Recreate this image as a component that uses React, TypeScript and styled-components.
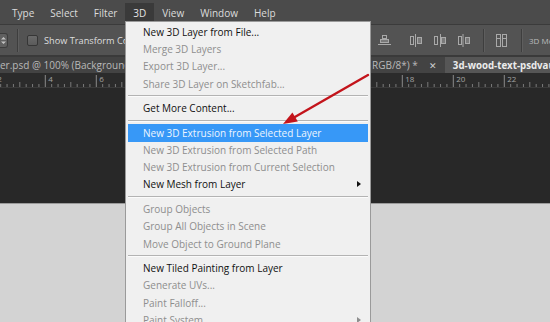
import React from 'react';
import styled, { createGlobalStyle, css } from 'styled-components';

const GlobalStyle = createGlobalStyle`
  html, body { margin: 0; padding: 0; background: #282828; }
  #root { width: 550px; height: 322px; }
`;

const Root = styled.div`
  width: 550px;
  height: 322px;
  position: relative;
  overflow: hidden;
  display: flex;
  flex-direction: column;
  font-family: "Open Sans", "Noto Sans", sans-serif;
  font-size: 10px;
  background: #282828;
`;

/* ---------- menu bar ---------- */
const MenuBar = styled.div`
  height: 24px;
  flex: 0 0 24px;
  display: flex;
  padding-left: 4px;
  background: #4b4b4b;
  box-sizing: border-box;
`;

const MenuTitle = styled.div<{ $open?: boolean }>`
  margin-top: 3px;
  height: 21px;
  padding: 0 8px 1px;
  box-sizing: border-box;
  display: flex;
  align-items: center;
  color: #dcdcdc;
  white-space: nowrap;
  ${p => p.$open && css`
    background: #3a3a3a;
    color: #e4e4e4;
  `}
`;

/* ---------- options bar ---------- */
const OptionsBar = styled.div`
  height: 31px;
  flex: 0 0 31px;
  box-sizing: border-box;
  border-top: 1px solid #3b3b3b;
  background: #535353;
  display: flex;
  align-items: center;
  overflow: hidden;
`;

const OptLeft = styled.div`
  flex: 0 0 378px;
  display: flex;
  align-items: center;
  overflow: hidden;
`;

const OptRight = styled.div`
  flex: 0 0 auto;
  display: flex;
  align-items: center;
`;

const Spinner = styled.div`
  width: 8px;
  height: 15px;
  box-sizing: border-box;
  background: #606060;
  border: 1px solid #3d3d3d;
  border-left: none;
  border-radius: 0 3px 3px 0;
  display: flex;
  align-items: center;
  justify-content: center;
`;

const VSep = styled.div<{ $ml: number }>`
  margin-left: ${p => p.$ml}px;
  width: 1px;
  height: 23px;
  background: #3e3e3e;
  border-right: 1px solid #5e5e5e;
`;

const Check = styled.div`
  margin-left: 8px;
  width: 11px;
  height: 11px;
  box-sizing: border-box;
  border: 1px solid #363636;
  border-radius: 2px;
  background: linear-gradient(#6a6a6a, #5b5b5b);
`;

const OptLabel = styled.span`
  margin-left: 6px;
  font-size: 9.2px;
  color: #dedede;
  white-space: nowrap;
`;

const IconSlot = styled.div<{ $ml: number }>`
  margin-left: ${p => p.$ml}px;
  width: 13px;
  height: 13px;
  display: flex;
`;

const ModeText = styled.span`
  margin-left: 6px;
  font-size: 8px;
  color: #bdbdbd;
  white-space: nowrap;
`;

/* ---------- document tabs ---------- */
const TabBar = styled.div`
  height: 18px;
  flex: 0 0 18px;
  box-sizing: border-box;
  padding-top: 2px;
  background: #3a3a3a;
  display: flex;
  overflow: hidden;
`;

const DocTab = styled.div<{ $active?: boolean }>`
  flex: 0 0 auto;
  display: flex;
  align-items: center;
  white-space: nowrap;
  color: #b9b9b9;
  background: #434343;
  ${p => p.$active && css`
    padding-left: 8px;
    background: #565656;
    color: #ececec;
    font-weight: 700;
    font-size: 9.7px;
  `}
`;

const HiddenTitle = styled.span`
  width: 372px;
  overflow: hidden;
`;

const CloseX = styled.span`
  margin: 0 8px 0 11px;
  font-size: 9px;
  color: #cfcfcf;
`;

/* ---------- ruler + canvas ---------- */
const Ruler = styled.div`
  height: 15px;
  flex: 0 0 15px;
  box-sizing: border-box;
  background: #2b2b2b;
  border-bottom: 1px solid #3a3a3a;
  display: flex;
`;

const Pasteboard = styled.div`
  height: 115px;
  flex: 0 0 115px;
  background: #282828;
`;

const Paper = styled.div`
  flex: 1;
  background: #d3d3d3;
  border-top: 1px solid #9a9a9a;
`;

/* ---------- dropdown ---------- */
const Dropdown = styled.div`
  position: absolute;
  left: 125px;
  top: 21px;
  width: 246px;
  box-sizing: border-box;
  border: 1px solid #9a9a9a;
  background: #f0f0f0;
  padding: 1.4px 2px 4px;
  display: flex;
  flex-direction: column;
`;

type ItemState = 'enabled' | 'disabled' | 'hover';

const Item = styled.div<{ $state: ItemState }>`
  height: 17.2px;
  flex: 0 0 17.2px;
  display: flex;
  align-items: center;
  padding: 0 7px 0 15px;
  white-space: nowrap;
  color: ${p => (p.$state === 'enabled' ? '#111111' : p.$state === 'hover' ? '#eef5fd' : '#8e8e8e')};
  background: ${p => (p.$state === 'hover' ? '#3798f7' : 'transparent')};
`;

const SubArrow = styled.span<{ $dim?: boolean }>`
  margin-left: auto;
  width: 0;
  height: 0;
  border-left: 4px solid ${p => (p.$dim ? '#8e8e8e' : '#111')};
  border-top: 3.5px solid transparent;
  border-bottom: 3.5px solid transparent;
`;

const Sep = styled.div`
  height: 7.5px;
  flex: 0 0 7.5px;
  display: flex;
  align-items: center;
  &::before {
    content: '';
    flex: 1;
    height: 1px;
    background: #b3b3b3;
    border-bottom: 1px solid #fbfbfb;
  }
`;

const Annotation = styled.svg`
  position: absolute;
  left: 0;
  top: 0;
  pointer-events: none;
`;

/* ---------- icon drawings ---------- */
const ic = '#a9a9a9';
const fillc = '#7a7a7a';

const AlignBottomIcon = () => (
  <svg width="13" height="13" viewBox="0 0 13 13">
    <rect x="4.5" y="1.5" width="4" height="3" fill="none" stroke={ic} />
    <rect x="2.5" y="5.5" width="8" height="3" fill={fillc} stroke={ic} />
    <line x1="0" y1="10.5" x2="13" y2="10.5" stroke={ic} />
  </svg>
);

const AlignHIcon = ({ line }: { line: number }) => (
  <svg width="13" height="13" viewBox="0 0 13 13">
    <rect x="0.5" y="2.5" width="3" height="8" fill="none" stroke={ic} />
    <line x1={line} y1="0" x2={line} y2="13" stroke={ic} />
    <rect x="7.5" y="3.5" width="4" height="6" fill={fillc} stroke={ic} />
  </svg>
);

const DistributeIcon = () => (
  <svg width="13" height="13" viewBox="0 0 13 13">
    <rect x="1.5" y="0.5" width="4" height="12" fill="none" stroke={ic} />
    <line x1="1.5" y1="4.5" x2="5.5" y2="4.5" stroke={ic} />
    <rect x="7.5" y="0.5" width="4" height="12" fill="none" stroke={ic} />
    <line x1="7.5" y1="4.5" x2="11.5" y2="4.5" stroke={ic} />
  </svg>
);

const SpinArrows = () => (
  <svg width="5" height="9" viewBox="0 0 5 9">
    <path d="M0 3.5 L2.5 1 L5 3.5 Z M0 5.5 L2.5 8 L5 5.5 Z" fill="#c4c4c4" />
  </svg>
);

const RulerMarks = () => {
  const majors: number[] = [];
  for (let k = -1; k <= 10; k++) majors.push(45.3 + 51 * k);
  return (
    <svg width="550" height="14" viewBox="0 0 550 14">
      {majors.map((x, i) => (
        <g key={i}>
          <line x1={x} y1="2" x2={x} y2="14" stroke="#8a8a8a" strokeWidth="1" />
          {(x < 122 || x > 372) && (
            <text x={x + 3} y="9" fontSize="8" fill="#a3a3a3" fontFamily="'Open Sans', 'Noto Sans', sans-serif">
              {2 + 2 * i}
            </text>
          )}
          {Array.from({ length: 7 }).map((_, j) => {
            const mx = x + (51 / 8) * (j + 1);
            return <line key={j} x1={mx} y1={j === 3 ? 9 : 11} x2={mx} y2="14" stroke="#7a7a7a" strokeWidth="1" />;
          })}
        </g>
      ))}
    </svg>
  );
};

type Entry = { kind: 'item'; label: string; state: ItemState; sub?: boolean } | { kind: 'sep' };

const entries: Entry[] = [
  { kind: 'item', label: 'New 3D Layer from File...', state: 'enabled' },
  { kind: 'item', label: 'Merge 3D Layers', state: 'disabled' },
  { kind: 'item', label: 'Export 3D Layer...', state: 'disabled' },
  { kind: 'item', label: 'Share 3D Layer on Sketchfab...', state: 'disabled' },
  { kind: 'sep' },
  { kind: 'item', label: 'Get More Content...', state: 'enabled' },
  { kind: 'sep' },
  { kind: 'item', label: 'New 3D Extrusion from Selected Layer', state: 'hover' },
  { kind: 'item', label: 'New 3D Extrusion from Selected Path', state: 'disabled' },
  { kind: 'item', label: 'New 3D Extrusion from Current Selection', state: 'disabled' },
  { kind: 'item', label: 'New Mesh from Layer', state: 'enabled', sub: true },
  { kind: 'sep' },
  { kind: 'item', label: 'Group Objects', state: 'disabled' },
  { kind: 'item', label: 'Group All Objects in Scene', state: 'disabled' },
  { kind: 'item', label: 'Move Object to Ground Plane', state: 'disabled' },
  { kind: 'sep' },
  { kind: 'item', label: 'New Tiled Painting from Layer', state: 'enabled' },
  { kind: 'item', label: 'Generate UVs...', state: 'disabled' },
  { kind: 'item', label: 'Paint Falloff...', state: 'disabled' },
  { kind: 'item', label: 'Paint System', state: 'disabled', sub: true },
];

const menus = ['Type', 'Select', 'Filter', '3D', 'View', 'Window', 'Help'];

export default function App() {
  return (
    <Root>
      <GlobalStyle />
      <MenuBar>
        {menus.map(m => (
          <MenuTitle key={m} $open={m === '3D'}>{m}</MenuTitle>
        ))}
      </MenuBar>

      <OptionsBar>
        <OptLeft>
          <Spinner><SpinArrows /></Spinner>
          <VSep $ml={9} />
          <Check />
          <OptLabel>Show Transform Controls</OptLabel>
        </OptLeft>
        <OptRight>
          <IconSlot $ml={0}><AlignBottomIcon /></IconSlot>
          <IconSlot $ml={19}><AlignHIcon line={5.5} /></IconSlot>
          <IconSlot $ml={11}><AlignHIcon line={6.5} /></IconSlot>
          <IconSlot $ml={11}><AlignHIcon line={5} /></IconSlot>
          <VSep $ml={12} />
          <IconSlot $ml={10}><DistributeIcon /></IconSlot>
          <VSep $ml={13} />
          <ModeText>3D Mode:</ModeText>
        </OptRight>
      </OptionsBar>

      <TabBar>
        <DocTab>
          <HiddenTitle>er.psd @ 100% (Background copy, Layer 1, Layer 2, Layer 3,</HiddenTitle>
          <span>RGB/8*) *</span>
          <CloseX>✕</CloseX>
        </DocTab>
        <DocTab $active>3d-wood-text-psdvault-after.psd</DocTab>
      </TabBar>

      <Ruler><RulerMarks /></Ruler>
      <Pasteboard />
      <Paper />

      <Dropdown>
        {entries.map((e, i) =>
          e.kind === 'sep' ? (
            <Sep key={i} />
          ) : (
            <Item key={i} $state={e.state}>
              {e.label}
              {e.sub && <SubArrow $dim={e.state === 'disabled'} />}
            </Item>
          )
        )}
      </Dropdown>

      <Annotation width="550" height="322" viewBox="0 0 550 322">
        <line x1="368" y1="75" x2="294" y2="117.5" stroke="#c3141b" strokeWidth="2.4" strokeLinecap="round" />
        <polygon points="283,124 297.8,121.4 292.4,112.4" fill="#c3141b" />
      </Annotation>
    </Root>
  );
}
